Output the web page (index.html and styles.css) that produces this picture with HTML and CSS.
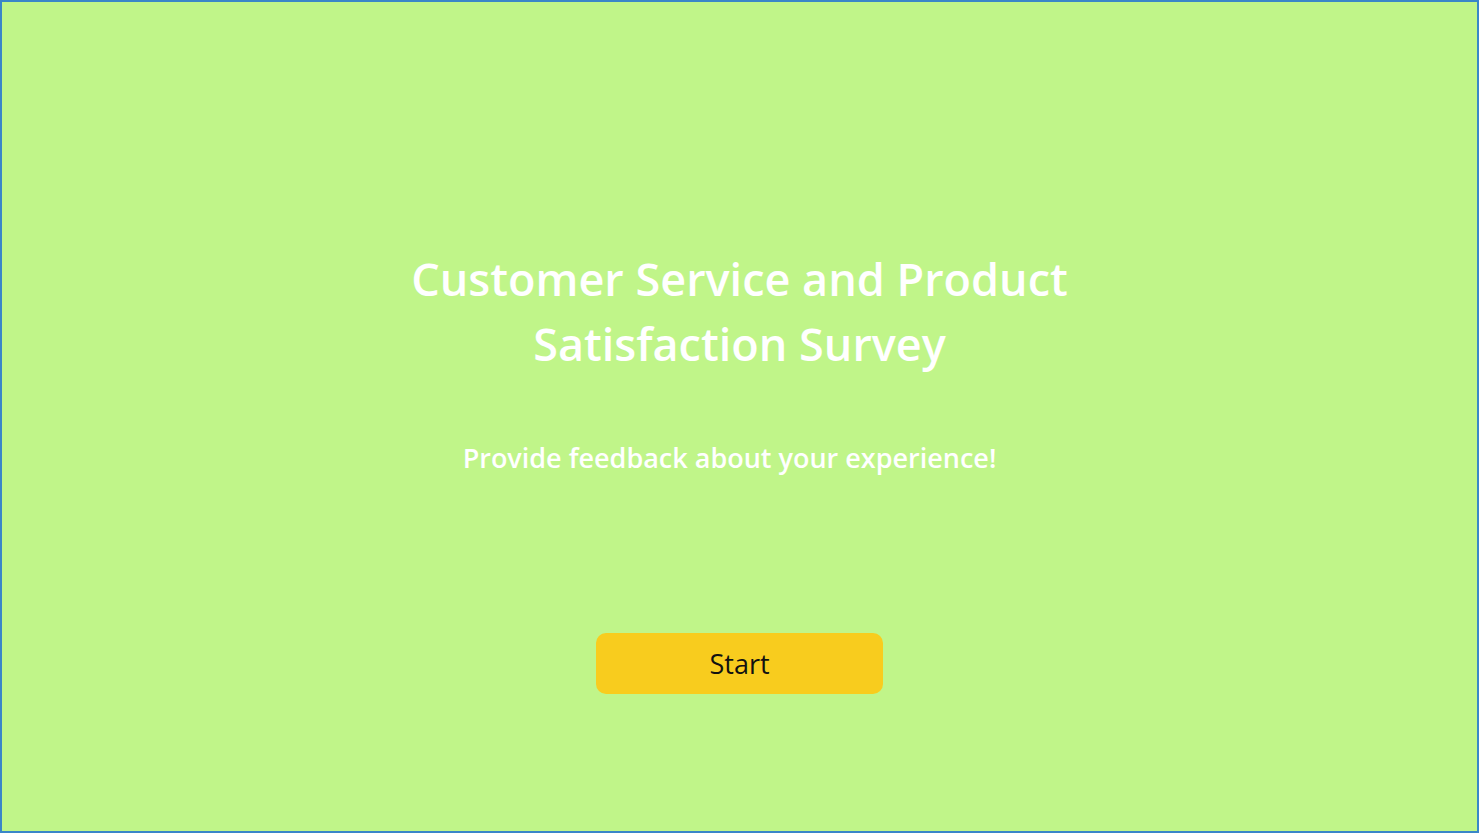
FILE: index.html
```html
<!DOCTYPE html>
<html>
<head>
<meta charset="utf-8">
<link rel="stylesheet" href="styles.css">
</head>
<body>
<main class="screen">
  <section class="intro">
    <h1 class="title">Customer Service and Product<br>Satisfaction Survey</h1>
    <p class="subtitle">Provide feedback about your experience!</p>
    <button class="start">Start</button>
  </section>
</main>
</body>
</html>
```
FILE: styles.css
```css
* { box-sizing: border-box; }
html, body { margin: 0; padding: 0; }
body {
  width: 1479px;
  height: 833px;
  overflow: hidden;
  font-family: "Open Sans", "Liberation Sans", sans-serif;
}
.screen {
  width: 1479px;
  height: 833px;
  background: #c0f589;
  border: 2px solid #3a86c8;
  display: flex;
  justify-content: center;
}
.intro {
  display: flex;
  flex-direction: column;
  align-items: center;
  padding-top: 244px;
}
.title {
  margin: 0;
  color: #ffffff;
  font-size: 45px;
  font-weight: 600;
  line-height: 65px;
  text-align: center;
}
.subtitle {
  margin: 64px 0 0 0;
  padding-right: 20px;
  color: #ffffff;
  font-size: 27px;
  font-weight: 600;
  line-height: 36px;
}
.start {
  margin-top: 157px;
  width: 287px;
  height: 61px;
  border: none;
  border-radius: 10px;
  background: #f8cc1e;
  color: #111;
  font-family: inherit;
  font-size: 27px;
  font-weight: 500;
}
```
